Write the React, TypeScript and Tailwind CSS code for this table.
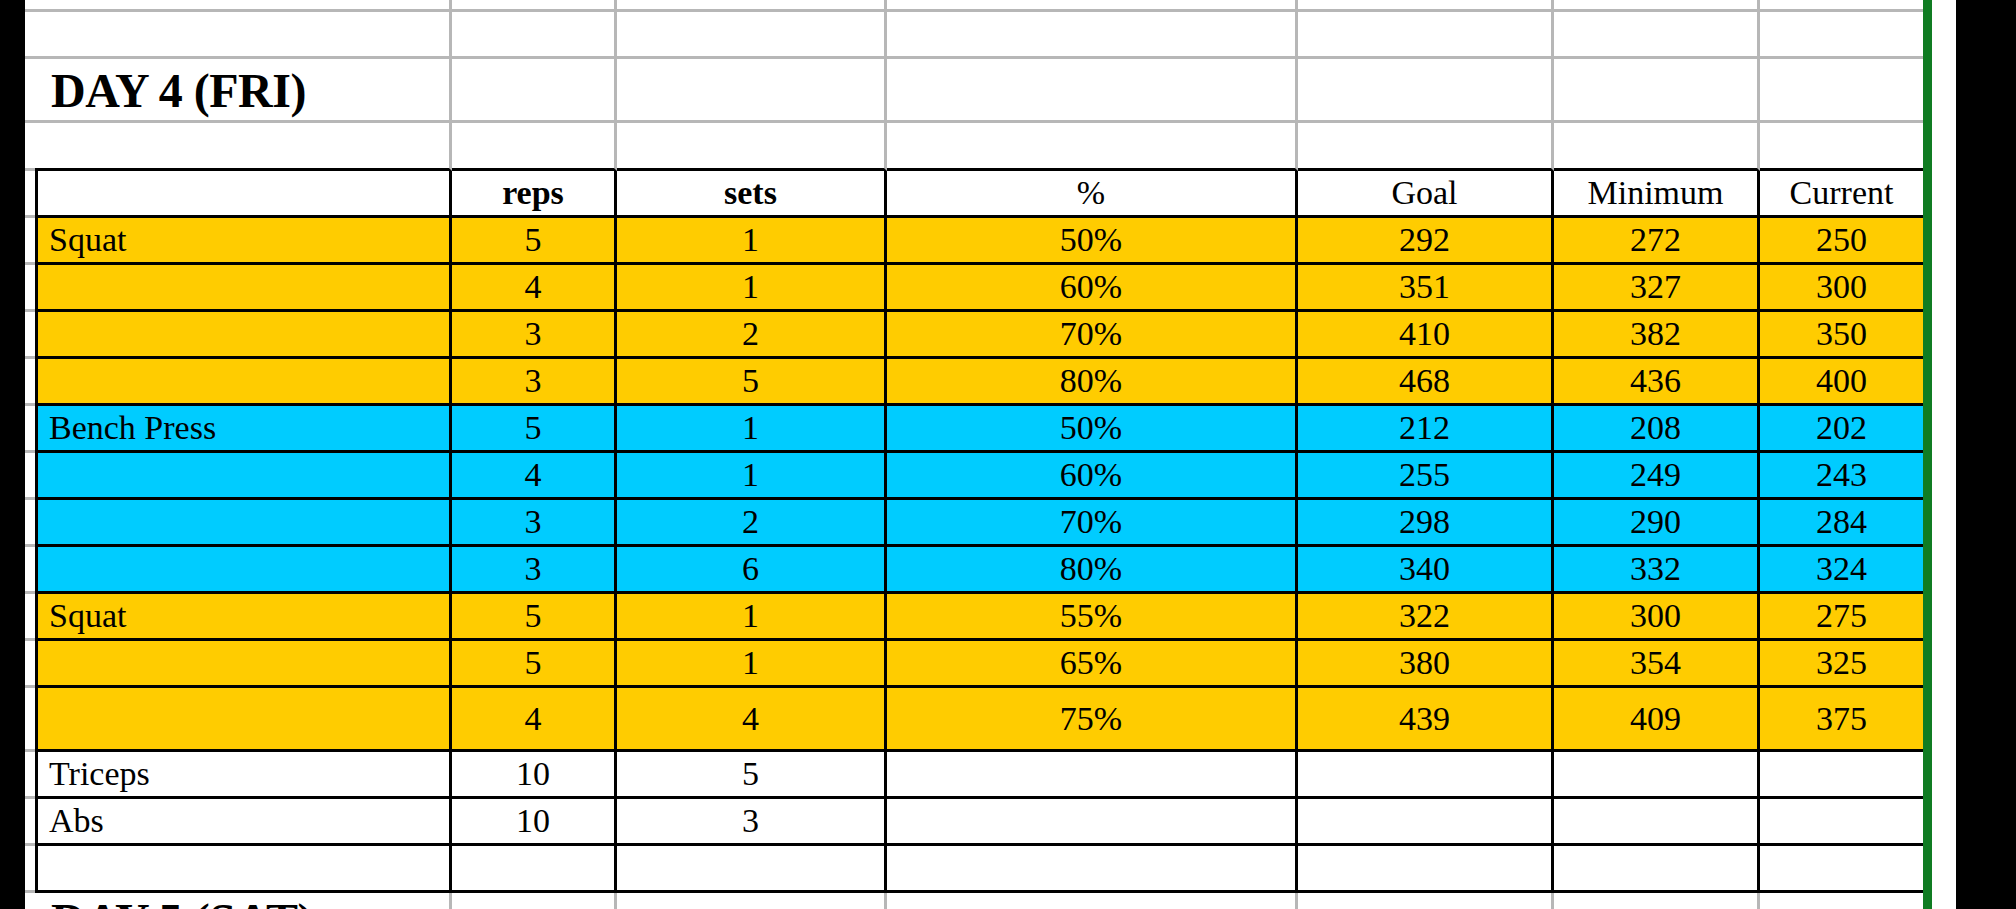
const colW = [
  "w-[417px]",
  "w-[165px]",
  "w-[270px]",
  "w-[411px]",
  "w-[256px]",
  "w-[206px]",
  "w-[163px]",
];

type Row = {
  cells: string[];
  bg: string;
  tall?: boolean;
  bold?: boolean[];
};

const Y = "bg-[#ffcc00]";
const B = "bg-[#00ccff]";
const W = "bg-white";

const rows: Row[] = [
  {
    cells: ["", "reps", "sets", "%", "Goal", "Minimum", "Current"],
    bg: W,
    bold: [false, true, true, false, false, false, false],
  },
  { cells: ["Squat", "5", "1", "50%", "292", "272", "250"], bg: Y },
  { cells: ["", "4", "1", "60%", "351", "327", "300"], bg: Y },
  { cells: ["", "3", "2", "70%", "410", "382", "350"], bg: Y },
  { cells: ["", "3", "5", "80%", "468", "436", "400"], bg: Y },
  { cells: ["Bench Press", "5", "1", "50%", "212", "208", "202"], bg: B },
  { cells: ["", "4", "1", "60%", "255", "249", "243"], bg: B },
  { cells: ["", "3", "2", "70%", "298", "290", "284"], bg: B },
  { cells: ["", "3", "6", "80%", "340", "332", "324"], bg: B },
  { cells: ["Squat", "5", "1", "55%", "322", "300", "275"], bg: Y },
  { cells: ["", "5", "1", "65%", "380", "354", "325"], bg: Y },
  { cells: ["", "4", "4", "75%", "439", "409", "375"], bg: Y, tall: true },
  { cells: ["Triceps", "10", "5", "", "", "", ""], bg: W },
  { cells: ["Abs", "10", "3", "", "", "", ""], bg: W },
  { cells: ["", "", "", "", "", "", ""], bg: W },
];

// plain gridline row above / below the bordered block
function GrayRow({ h, title, lastBlack }: { h: string; title?: string; lastBlack?: boolean }) {
  return (
    <div className={`flex shrink-0 ${h}`}>
      <div className="w-[10px] border-b-[3px] border-[#b7b7b7]" />
      {colW.map((w, i) => (
        <div
          key={i}
          className={`${w} flex items-center ${lastBlack ? "border-b-[3px] border-b-black" : "border-b-[3px] border-b-[#b7b7b7]"} ${
            i < 6 ? "border-r-[3px] border-r-[#b7b7b7]" : ""
          }`}
        >
          {i === 0 && title ? (
            <span className="pl-[16px] pt-[2px] text-[48px] font-bold leading-none whitespace-nowrap tracking-[-0.5px]">
              {title}
            </span>
          ) : null}
        </div>
      ))}
    </div>
  );
}

function TableRow({ row }: { row: Row }) {
  const h = row.tall ? "h-[64px]" : "h-[47px]";
  return (
    <div className={`flex shrink-0 ${h}`}>
      <div className="w-[10px] border-b-[3px] border-[#b7b7b7]" />
      {row.cells.map((c, i) => (
        <div
          key={i}
          className={`${colW[i]} ${row.bg} flex items-center border-b-[3px] border-black ${
            i === 0 ? "border-l-[3px] justify-start pl-[11px]" : "justify-center"
          } ${i < 6 ? "border-r-[3px]" : ""}`}
        >
          <span className={`text-[34px] leading-none whitespace-nowrap ${row.bold?.[i] ? "font-bold" : ""}`}>
            {c}
          </span>
        </div>
      ))}
    </div>
  );
}

export default function App() {
  return (
    <div className="flex h-[909px] w-[2016px] overflow-hidden bg-white text-black font-['Liberation_Serif',serif]">
      <div className="w-[25px] shrink-0 bg-black" />

      <div className="w-[1898px] shrink-0 flex flex-col">
        <GrayRow h="h-[12px]" />
        <GrayRow h="h-[47px]" />
        <GrayRow h="h-[64px]" title="DAY 4 (FRI)" />
        <GrayRow h="h-[48px]" lastBlack />

        {rows.map((r, i) => (
          <TableRow key={i} row={r} />
        ))}

        <div className="flex shrink-0 h-[64px]">
          <div className="w-[10px]" />
          {colW.map((w, i) => (
            <div
              key={i}
              className={`${w} flex items-start ${i < 6 ? "border-r-[3px] border-r-[#b7b7b7]" : ""}`}
            >
              {i === 0 ? (
                <span className="pl-[16px] pt-[4px] text-[48px] font-bold leading-none whitespace-nowrap tracking-[-0.5px]">
                  DAY 5 (SAT)
                </span>
              ) : null}
            </div>
          ))}
        </div>
      </div>

      <div className="w-[9px] shrink-0 bg-[#107c22]" />
      <div className="w-[24px] shrink-0 bg-white" />
      <div className="flex-1 bg-black" />
    </div>
  );
}
